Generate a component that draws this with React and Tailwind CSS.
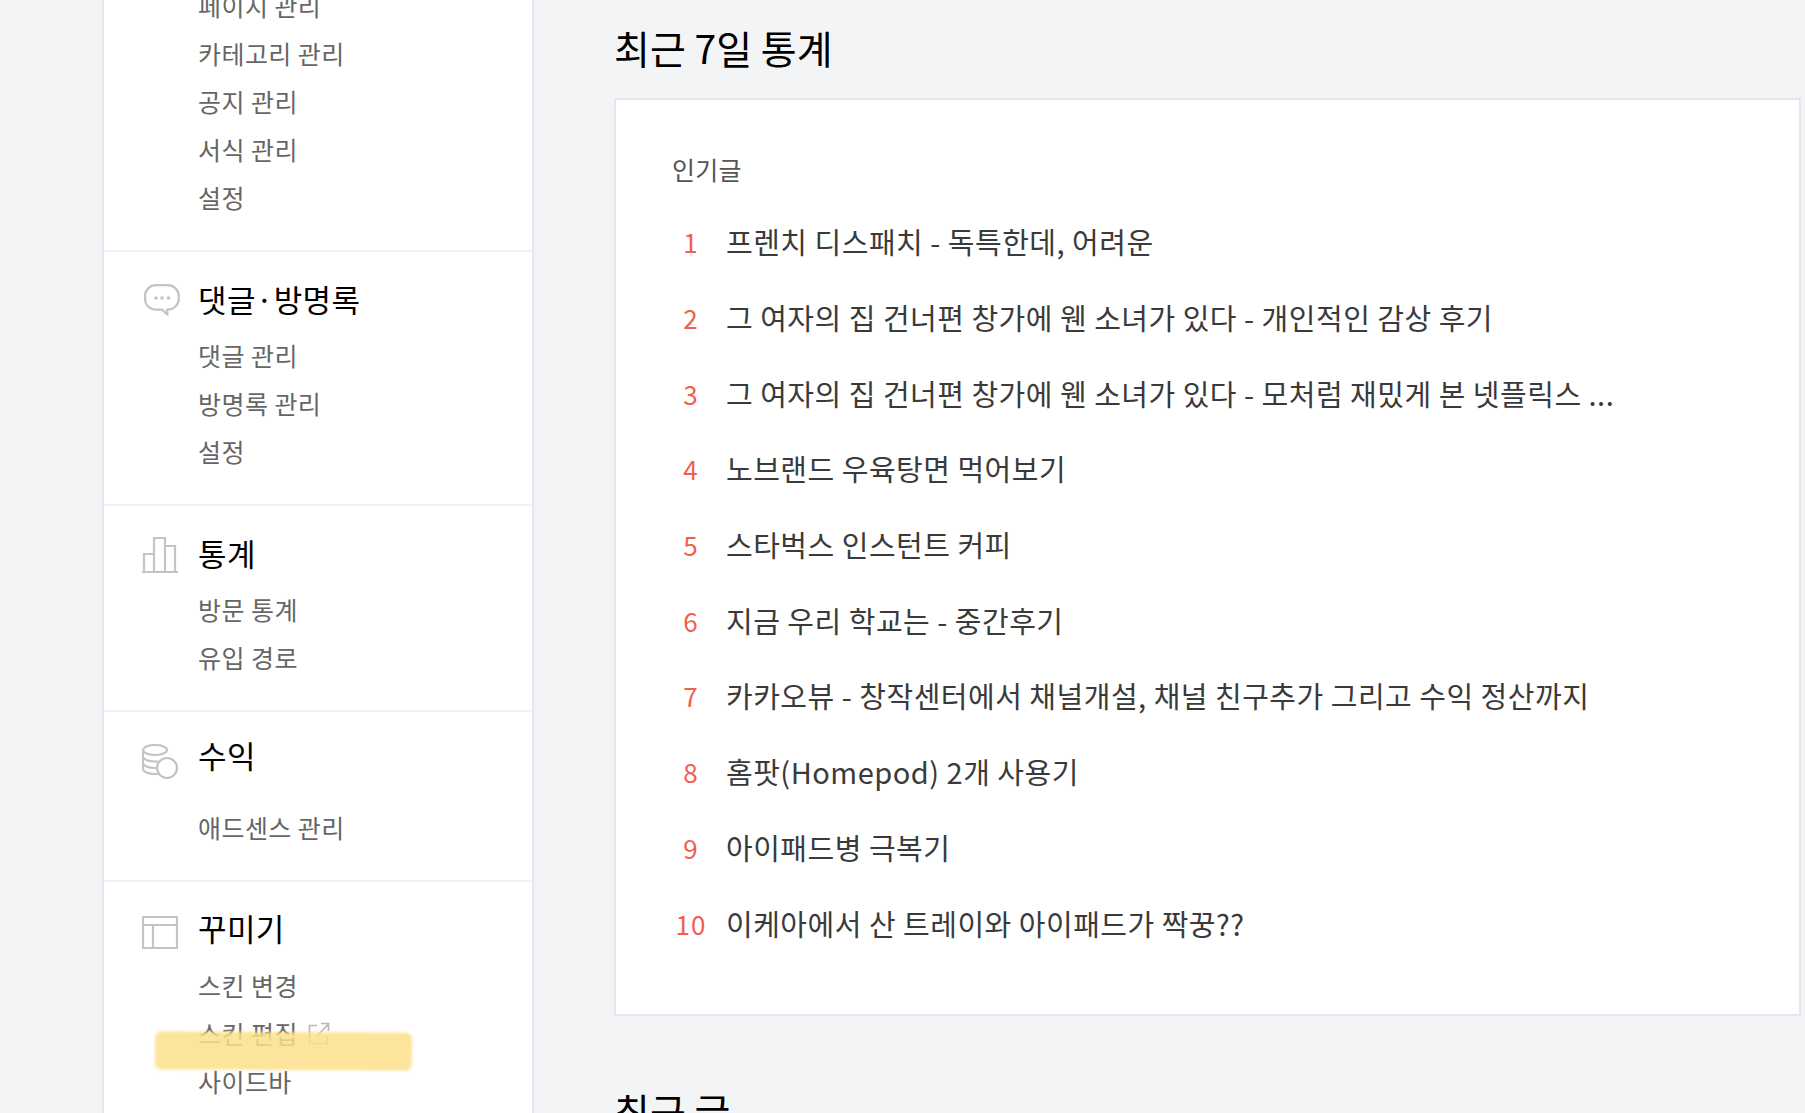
const FONT = { fontFamily: '"Noto Sans CJK KR", "Noto Sans", sans-serif' };

function ChatIcon() {
  return (
    <svg width="36" height="32" viewBox="0 0 36 32" fill="none" className="shrink-0 ml-[2px] -mr-[2px] mt-[4px]" stroke="#c4c4c4" strokeWidth="2.200">
      <path d="M12 1.200h11.500c6.300 0 11.300 4.800 11.300 10.800v2.800c0 6-5 10.800-11.300 10.800h-.5l.5 5-5.500-5H12c-6.300 0-11-4.800-11-10.800V12C1 6 5.700 1.200 12 1.200z" strokeLinejoin="round" />
      <circle cx="12" cy="14" r="1.800" fill="#c4c4c4" stroke="none" />
      <circle cx="18" cy="14" r="1.800" fill="#c4c4c4" stroke="none" />
      <circle cx="24.500" cy="14" r="1.800" fill="#c4c4c4" stroke="none" />
    </svg>
  );
}
function BarIcon() {
  return (
    <svg width="36" height="36" viewBox="0 0 36 36" fill="none" className="shrink-0 mt-[6px]" stroke="#c4c4c4" strokeWidth="2.200">
      <path d="M0 35h36M2 35V17h10v18M12 35V1h11v34M23 35V9h10v26" />
    </svg>
  );
}
function CoinIcon() {
  return (
    <svg width="36" height="35" viewBox="0 0 36 35" fill="none" className="shrink-0 mt-[15px]" stroke="#c4c4c4" strokeWidth="2.200">
      <ellipse cx="13" cy="6" rx="12" ry="5" />
      <path d="M1 6v6.500c0 2.500 5 5 12 5h3M1 12.500V19c0 2.500 5 5 12 5h2M1 19v6c0 2.500 5 5 12 5h4" />
      <circle cx="25" cy="24" r="10" fill="#fff" />
    </svg>
  );
}
function LayoutIcon() {
  return (
    <svg width="36" height="33" viewBox="0 0 36 33" fill="none" className="shrink-0 mt-[10px]" stroke="#c4c4c4" strokeWidth="2.200">
      <path d="M1 1h34v31H1zM1 9h34M11 9v23" />
    </svg>
  );
}
function ExternalIcon() {
  return (
    <svg width="22" height="23" viewBox="0 0 22 23" fill="none" className="ml-[10px] mt-[1px]" stroke="#b8b8b8" strokeWidth="1.700">
      <path d="M9 3.500H1.500V21.500H19V14M9 14 20 2.500M13 1.500h7.500V9" />
    </svg>
  );
}

function Item({ children }) {
  return (
    <div className="h-[48px] flex items-center pl-[94px] text-[25px] leading-none text-[#666] tracking-[0.45px]">
      {children}
    </div>
  );
}

function Heading({ icon, children }) {
  return (
    <div className="h-[48px] flex items-center pl-[38px] gap-[20px] text-[31px] leading-none text-black tracking-[0.4px]">
      {icon}
      <span>{children}</span>
    </div>
  );
}

const rows = [
  "프렌치 디스패치 - 독특한데, 어려운",
  "그 여자의 집 건너편 창가에 웬 소녀가 있다 - 개인적인 감상 후기",
  "그 여자의 집 건너편 창가에 웬 소녀가 있다 - 모처럼 재밌게 본 넷플릭스 ...",
  "노브랜드 우육탕면 먹어보기",
  "스타벅스 인스턴트 커피",
  "지금 우리 학교는 - 중간후기",
  "카카오뷰 - 창작센터에서 채널개설, 채널 친구추가 그리고 수익 정산까지",
  "홈팟(Homepod) 2개 사용기",
  "아이패드병 극복기",
  "이케아에서 산 트레이와 아이패드가 짝꿍??",
];

export default function App() {
  return (
    <div style={FONT} className="relative h-[1113px] overflow-hidden bg-[#f3f4f6] flex">
      <aside className="ml-[102px] w-[432px] shrink-0 h-full bg-white border-x-2 border-[#e4e7ef]">
        <div className="-mt-[19px] border-b-2 border-[#f1f2f6] pb-[29px]">
          <Item>페이지 관리</Item>
          <Item>카테고리 관리</Item>
          <Item>공지 관리</Item>
          <Item>서식 관리</Item>
          <Item>설정</Item>
        </div>
        <div className="pt-[22px] pb-[29px] border-b-2 border-[#f1f2f6]">
          <Heading icon={<ChatIcon />}>댓글·방명록</Heading>
          <div className="mt-[9px]">
            <Item>댓글 관리</Item>
            <Item>방명록 관리</Item>
            <Item>설정</Item>
          </div>
        </div>
        <div className="pt-[22px] pb-[29px] border-b-2 border-[#f1f2f6]">
          <Heading icon={<BarIcon />}>통계</Heading>
          <div className="mt-[9px]">
            <Item>방문 통계</Item>
            <Item>유입 경로</Item>
          </div>
        </div>
        <div className="pt-[18px] pb-[29px] border-b-2 border-[#f1f2f6]">
          <Heading icon={<CoinIcon />}>수익</Heading>
          <div className="mt-[25px]">
            <Item>애드센스 관리</Item>
          </div>
        </div>
        <div className="pt-[21px]">
          <Heading icon={<LayoutIcon />}>꾸미기</Heading>
          <div className="mt-[10px]">
            <Item>스킨 변경</Item>
            <Item>스킨 편집<ExternalIcon /></Item>
            <Item>사이드바</Item>
          </div>
        </div>
      </aside>

      <main className="ml-[80px] w-[1187px] shrink-0">
        <h2 className="h-[98px] pt-[23px] text-[39px] leading-[48px] text-black font-normal">최근 7일 통계</h2>
        <section className="h-[918px] bg-white border-2 border-[#e4e7ef]">
          <h3 className="mt-[49px] ml-[56px] text-[25px] leading-[40px] text-[#555] font-normal tracking-[0.3px]">인기글</h3>
          <ol className="mt-[15px] ml-[49px]">
            {rows.map((t, i) => (
              <li key={i} className="h-[75.7px] flex items-center">
                <span className="w-[52px] text-center text-[26px] text-[#f0604a] tracking-[1px] shrink-0">{i + 1}</span>
                <span className="ml-[9px] text-[29px] leading-none text-[#3a3a3a] tracking-[0.5px] whitespace-nowrap">{t}</span>
              </li>
            ))}
          </ol>
        </section>
        <h2 className="mt-[70px] text-[39px] leading-[48px] text-black font-normal">최근 글</h2>
      </main>

      <div className="absolute left-[155px] top-[1032px] w-[257px] h-[38px] rounded-[6px] bg-[#fbe18a]/85 blur-[1.5px] rotate-[0.3deg]" />
    </div>
  );
}
